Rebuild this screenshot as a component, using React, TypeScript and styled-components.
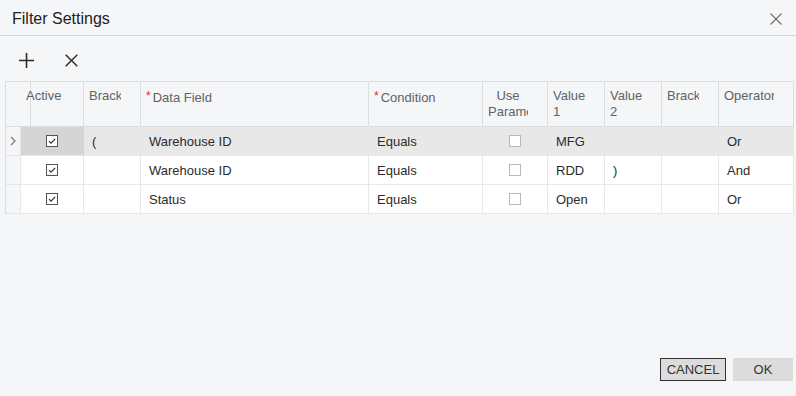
import React from 'react';
import styled, { createGlobalStyle } from 'styled-components';

const GlobalStyle = createGlobalStyle`
  html, body {
    margin: 0;
    background: #f5f6f8;
    font-family: "Liberation Sans", Arial, sans-serif;
  }
`;

const COLS = '15px 63px 57px 228px 114px 65px 57px 57px 57px 75px';
const LINE = '#dcdde0';
const BODY_LINE = '#e6e7e9';

const Dialog = styled.div`
  display: flex;
  flex-direction: column;
  height: 396px;
  width: 796px;
  background: #f5f6f8;
`;

const TitleBar = styled.div`
  height: 36px;
  box-sizing: border-box;
  border-bottom: 1px solid #d6d7d9;
  display: flex;
  align-items: center;
  justify-content: space-between;
  padding: 2px 14px 0 12px;
`;

const Title = styled.div`
  font-size: 16px;
  color: #222;
`;

const IconButton = styled.button`
  border: 0;
  background: none;
  padding: 0;
  display: flex;
  align-items: center;
  justify-content: center;
  cursor: pointer;
`;

const Toolbar = styled.div`
  height: 45px;
  box-sizing: border-box;
  display: flex;
  align-items: center;
  gap: 31px;
  padding: 3px 0 0 19px;
`;

const Grid = styled.div`
  display: grid;
  grid-template-columns: ${COLS};
  margin: 0 3px 0 5px;
  border-top: 1px solid ${LINE};
  border-left: 1px solid ${LINE};
`;

const HeadCell = styled.div<{ $center?: boolean }>`
  box-sizing: border-box;
  height: 45px;
  border-right: 1px solid ${LINE};
  border-bottom: 1px solid ${LINE};
  padding: 6px 19px 0 5px;
  font-size: 13px;
  line-height: 16px;
  color: #5f6266;
  text-align: ${p => (p.$center ? 'center' : 'left')};
`;

const HeadLabel = styled.div`
  overflow: hidden;
  height: 32px;
`;

const Req = styled.span`
  color: #e0262b;
  font-size: 12px;
  vertical-align: 2px;
  margin-right: 2px;
`;

const Cell = styled.div<{ $bg: string; $hl?: boolean; $center?: boolean }>`
  box-sizing: border-box;
  height: 29px;
  background: ${p => p.$bg};
  border-right: 1px solid ${p => (p.$hl ? 'transparent' : BODY_LINE)};
  border-bottom: 1px solid ${BODY_LINE};
  padding-left: ${p => (p.$center ? 0 : 8)}px;
  display: flex;
  align-items: center;
  justify-content: ${p => (p.$center ? 'center' : 'flex-start')};
  font-size: 13px;
  color: #2b2b2b;
  white-space: nowrap;
  overflow: hidden;
`;

const Footer = styled.div`
  margin-top: auto;
  display: flex;
  justify-content: flex-end;
  gap: 7px;
  padding: 0 3px 15px 0;
`;

const Button = styled.button<{ $focused?: boolean }>`
  box-sizing: border-box;
  height: 23px;
  width: ${p => (p.$focused ? 66 : 60)}px;
  border: 1px solid ${p => (p.$focused ? '#333' : 'transparent')};
  background: #dcdcdc;
  color: #333;
  font-family: "Liberation Sans", Arial, sans-serif;
  font-size: 13px;
  padding: 0;
`;

const Check = ({ on }: { on: boolean }) => (
  <svg width="12" height="12" viewBox="0 0 12 12">
    <rect x="0.5" y="0.5" width="11" height="11" fill="#fff" stroke={on ? '#555' : '#b9b9b9'} />
    {on && <path d="M3 6.2 L5 8.2 L9.2 3.8" fill="none" stroke="#333" strokeWidth="1.2" />}
  </svg>
);

const Chevron = () => (
  <svg width="6" height="10" viewBox="0 0 6 10">
    <path d="M1 1 L5 5 L1 9" fill="none" stroke="#777" strokeWidth="1.2" />
  </svg>
);

type Row = {
  bracket: string;
  field: string;
  cond: string;
  v1: string;
  v2: string;
  close: string;
  op: string;
};

const rows: Row[] = [
  { bracket: '(', field: 'Warehouse ID', cond: 'Equals', v1: 'MFG', v2: '', close: '', op: 'Or' },
  { bracket: '', field: 'Warehouse ID', cond: 'Equals', v1: 'RDD', v2: ')', close: '', op: 'And' },
  { bracket: '', field: 'Status', cond: 'Equals', v1: 'Open', v2: '', close: '', op: 'Or' },
];

export default function App() {
  return (
    <Dialog>
      <GlobalStyle />
      <TitleBar>
        <Title>Filter Settings</Title>
        <IconButton aria-label="close">
          <svg width="12" height="12" viewBox="0 0 12 12">
            <path d="M0.5 0.5 L11.5 11.5 M11.5 0.5 L0.5 11.5" stroke="#707070" strokeWidth="1.1" />
          </svg>
        </IconButton>
      </TitleBar>
      <Toolbar>
        <IconButton aria-label="add">
          <svg width="15" height="15" viewBox="0 0 15 15">
            <path d="M7.5 0 V15 M0 7.5 H15" stroke="#2a2a2a" strokeWidth="1.6" />
          </svg>
        </IconButton>
        <IconButton aria-label="delete">
          <svg width="13" height="13" viewBox="0 0 13 13">
            <path d="M0.7 0.7 L12.3 12.3 M12.3 0.7 L0.7 12.3" stroke="#2a2a2a" strokeWidth="1.4" />
          </svg>
        </IconButton>
      </Toolbar>
      <Grid>
        <HeadCell />
        <HeadCell><HeadLabel>Active</HeadLabel></HeadCell>
        <HeadCell><HeadLabel>Brackets</HeadLabel></HeadCell>
        <HeadCell><HeadLabel><Req>*</Req>Data Field</HeadLabel></HeadCell>
        <HeadCell><HeadLabel><Req>*</Req>Condition</HeadLabel></HeadCell>
        <HeadCell $center><HeadLabel>Use Parameters</HeadLabel></HeadCell>
        <HeadCell><HeadLabel>Value 1</HeadLabel></HeadCell>
        <HeadCell><HeadLabel>Value 2</HeadLabel></HeadCell>
        <HeadCell><HeadLabel>Brackets</HeadLabel></HeadCell>
        <HeadCell><HeadLabel>Operator</HeadLabel></HeadCell>
        {rows.map((r, i) => {
          const hl = i === 0;
          const bg = hl ? '#e8e8e8' : '#ffffff';
          return (
            <React.Fragment key={i}>
              <Cell $bg="#f5f6f8" $center>{hl && <Chevron />}</Cell>
              <Cell $bg={hl ? '#d5d5d5' : bg} $hl={hl} $center><Check on /></Cell>
              <Cell $bg={bg} $hl={hl}>{r.bracket}</Cell>
              <Cell $bg={bg} $hl={hl}>{r.field}</Cell>
              <Cell $bg={bg} $hl={hl}>{r.cond}</Cell>
              <Cell $bg={bg} $hl={hl} $center><Check on={false} /></Cell>
              <Cell $bg={bg} $hl={hl}>{r.v1}</Cell>
              <Cell $bg={bg} $hl={hl}>{r.v2}</Cell>
              <Cell $bg={bg} $hl={hl}>{r.close}</Cell>
              <Cell $bg={bg} $hl={hl}>{r.op}</Cell>
            </React.Fragment>
          );
        })}
      </Grid>
      <Footer>
        <Button $focused>CANCEL</Button>
        <Button>OK</Button>
      </Footer>
    </Dialog>
  );
}
